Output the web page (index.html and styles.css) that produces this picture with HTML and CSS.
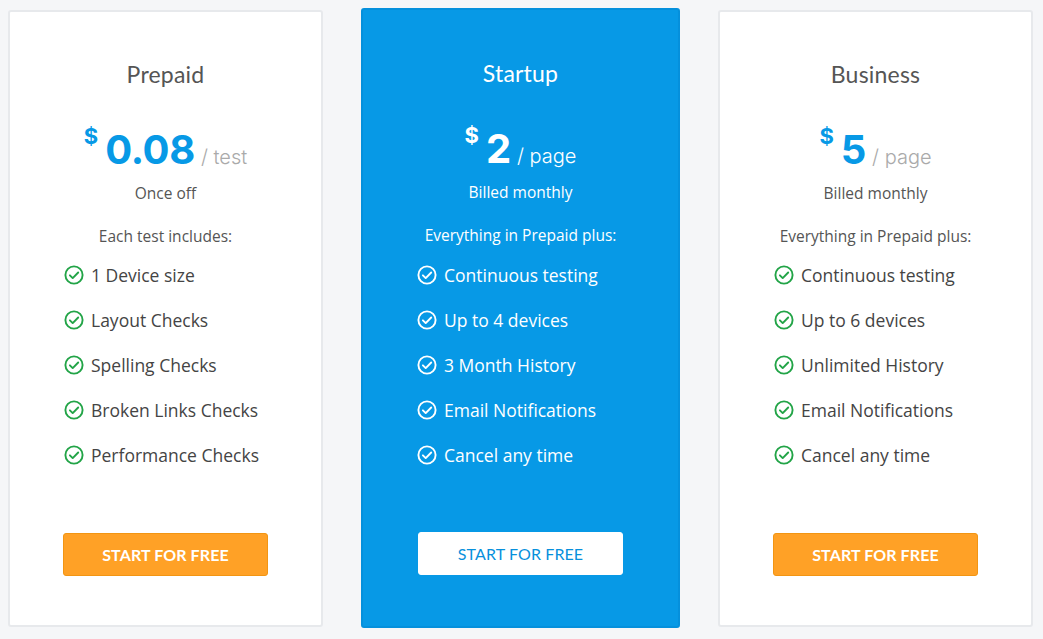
FILE: index.html
```html
<!DOCTYPE html>
<html>
<head>
<meta charset="utf-8">
<link rel="stylesheet" href="styles.css">
</head>
<body>
<svg width="0" height="0" class="defs">
  <symbol id="chk" viewBox="0 0 20 20">
    <circle cx="10" cy="10" r="8.6" fill="none" stroke="currentColor" stroke-width="1.9"/>
    <path d="M5.9 10.3 L8.7 13.1 L14.2 7.5" fill="none" stroke="currentColor" stroke-width="1.9" stroke-linecap="round" stroke-linejoin="round"/>
  </symbol>
</svg>
<div class="plans">
  <div class="card">
    <h2 class="title">Prepaid</h2>
    <div class="price"><span class="cur">$</span><span class="amt">0.08</span><span class="per">/ test</span></div>
    <div class="note">Once off</div>
    <div class="intro">Each test includes:</div>
    <ul class="feats">
      <li><svg class="ic"><use href="#chk"/></svg>1 Device size</li>
      <li><svg class="ic"><use href="#chk"/></svg>Layout Checks</li>
      <li><svg class="ic"><use href="#chk"/></svg>Spelling Checks</li>
      <li><svg class="ic"><use href="#chk"/></svg>Broken Links Checks</li>
      <li><svg class="ic"><use href="#chk"/></svg>Performance Checks</li>
    </ul>
    <a class="btn">START FOR FREE</a>
  </div>
  <div class="card featured">
    <h2 class="title">Startup</h2>
    <div class="price"><span class="cur">$</span><span class="amt">2</span><span class="per">/ page</span></div>
    <div class="note">Billed monthly</div>
    <div class="intro">Everything in Prepaid plus:</div>
    <ul class="feats">
      <li><svg class="ic"><use href="#chk"/></svg>Continuous testing</li>
      <li><svg class="ic"><use href="#chk"/></svg>Up to 4 devices</li>
      <li><svg class="ic"><use href="#chk"/></svg>3 Month History</li>
      <li><svg class="ic"><use href="#chk"/></svg>Email Notifications</li>
      <li><svg class="ic"><use href="#chk"/></svg>Cancel any time</li>
    </ul>
    <a class="btn">START FOR FREE</a>
  </div>
  <div class="card">
    <h2 class="title">Business</h2>
    <div class="price"><span class="cur">$</span><span class="amt">5</span><span class="per">/ page</span></div>
    <div class="note">Billed monthly</div>
    <div class="intro">Everything in Prepaid plus:</div>
    <ul class="feats">
      <li><svg class="ic"><use href="#chk"/></svg>Continuous testing</li>
      <li><svg class="ic"><use href="#chk"/></svg>Up to 6 devices</li>
      <li><svg class="ic"><use href="#chk"/></svg>Unlimited History</li>
      <li><svg class="ic"><use href="#chk"/></svg>Email Notifications</li>
      <li><svg class="ic"><use href="#chk"/></svg>Cancel any time</li>
    </ul>
    <a class="btn">START FOR FREE</a>
  </div>
</div>
</body>
</html>
```
FILE: styles.css
```css
html, body {
  margin: 0;
  padding: 0;
  background: #f5f6f8;
}
.defs { position: absolute; }
.plans {
  display: flex;
  align-items: center;
  gap: 38px;
  padding: 8px 0 0 8px;
  font-family: "Open Sans", sans-serif;
}
.card {
  box-sizing: border-box;
  width: 315px;
  height: 617px;
  background: #fff;
  border: 2px solid #e7e9ec;
  border-radius: 3px;
  display: flex;
  flex-direction: column;
  align-items: center;
  padding-top: 48px;
  color: #555;
}
.card.featured {
  width: 319px;
  height: 620px;
  background: #0799e6;
  border-color: #0590dc;
  color: #fff;
  padding-top: 49px;
}
.title {
  margin: 0;
  font-family: "Lato", sans-serif;
  font-weight: 400;
  font-size: 23px;
  line-height: 28px;
  color: #555;
  letter-spacing: 0.2px;
}
.featured .title { color: #fff; }
.price {
  margin-top: 37px;
  display: flex;
  align-items: baseline;
  height: 50px;
  line-height: 50px;
  font-family: "Inter", sans-serif;
}
.cur {
  font-size: 22px;
  font-weight: 700;
  color: #0799e6;
  align-self: flex-start;
  line-height: 22px;
  margin-right: 7px;
}
.amt {
  font-size: 40px;
  font-weight: 700;
  color: #0799e6;
  letter-spacing: -0.3px;
}
.per {
  font-size: 20px;
  font-weight: 300;
  color: #aaa;
  margin-left: 6px;
}
.featured .cur, .featured .amt, .featured .per { color: #fff; }
.note {
  margin-top: 7px;
  font-size: 15.5px;
  line-height: 22px;
}
.intro {
  margin-top: 21px;
  font-size: 15.5px;
  line-height: 22px;
}
.feats {
  list-style: none;
  margin: 6px 0 0 0;
  padding: 0 0 0 54px;
  align-self: stretch;
}
.feats li {
  display: flex;
  align-items: center;
  height: 45px;
  font-size: 17.5px;
  color: #444;
}
.featured .feats li { color: #fff; }
.ic {
  width: 20px;
  height: 20px;
  color: #22a447;
  margin-right: 7px;
  flex: none;
}
.featured .ic { color: #fff; }
.btn {
  margin-top: 55px;
  box-sizing: border-box;
  width: 205px;
  height: 43px;
  display: flex;
  align-items: center;
  justify-content: center;
  background: #ffa126;
  border: 1px solid #f29513;
  border-radius: 3px;
  color: #fff;
  font-family: "Lato", sans-serif;
  font-weight: 700;
  font-size: 16px;
  letter-spacing: 0.1px;
}
.featured .btn {
  background: #fff;
  border-color: #fff;
  color: #0790dc;
  font-weight: 400;
}
```
